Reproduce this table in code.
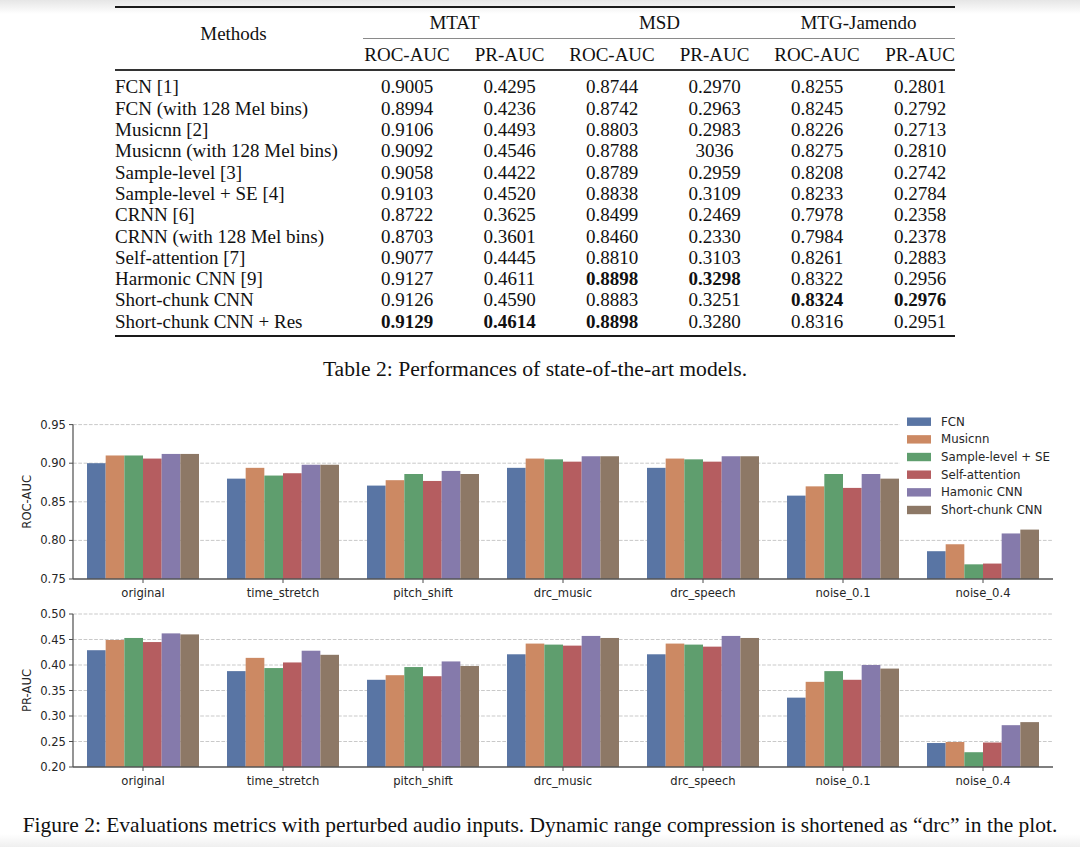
import React from "react";

const COLORS = ["#5975a4", "#cc8963", "#5f9e6e", "#b55d60", "#857aab", "#8d7866"];
const MODELS = ["FCN", "Musicnn", "Sample-level + SE", "Self-attention", "Hamonic CNN", "Short-chunk CNN"];
const GROUPS = ["original", "time_stretch", "pitch_shift", "drc_music", "drc_speech", "noise_0.1", "noise_0.4"];

const ROC = [
  [0.9, 0.91, 0.91, 0.906, 0.912, 0.912],
  [0.88, 0.894, 0.884, 0.887, 0.898, 0.898],
  [0.871, 0.878, 0.886, 0.877, 0.89, 0.886],
  [0.894, 0.906, 0.905, 0.902, 0.909, 0.909],
  [0.894, 0.906, 0.905, 0.902, 0.909, 0.909],
  [0.858, 0.87, 0.886, 0.868, 0.886, 0.88],
  [0.786, 0.795, 0.769, 0.77, 0.809, 0.814],
];

const PR = [
  [0.429, 0.449, 0.453, 0.445, 0.462, 0.46],
  [0.388, 0.414, 0.394, 0.405, 0.428, 0.42],
  [0.371, 0.38, 0.396, 0.378, 0.407, 0.398],
  [0.421, 0.442, 0.44, 0.438, 0.457, 0.453],
  [0.421, 0.442, 0.44, 0.436, 0.457, 0.453],
  [0.336, 0.367, 0.388, 0.371, 0.4, 0.393],
  [0.247, 0.249, 0.229, 0.248, 0.282, 0.288],
];

type Cell = { v: string; b?: boolean };

const ROWS: { name: string; cells: Cell[] }[] = [
  { name: "FCN [1]", cells: [{ v: "0.9005" }, { v: "0.4295" }, { v: "0.8744" }, { v: "0.2970" }, { v: "0.8255" }, { v: "0.2801" }] },
  { name: "FCN (with 128 Mel bins)", cells: [{ v: "0.8994" }, { v: "0.4236" }, { v: "0.8742" }, { v: "0.2963" }, { v: "0.8245" }, { v: "0.2792" }] },
  { name: "Musicnn [2]", cells: [{ v: "0.9106" }, { v: "0.4493" }, { v: "0.8803" }, { v: "0.2983" }, { v: "0.8226" }, { v: "0.2713" }] },
  { name: "Musicnn (with 128 Mel bins)", cells: [{ v: "0.9092" }, { v: "0.4546" }, { v: "0.8788" }, { v: "3036" }, { v: "0.8275" }, { v: "0.2810" }] },
  { name: "Sample-level [3]", cells: [{ v: "0.9058" }, { v: "0.4422" }, { v: "0.8789" }, { v: "0.2959" }, { v: "0.8208" }, { v: "0.2742" }] },
  { name: "Sample-level + SE [4]", cells: [{ v: "0.9103" }, { v: "0.4520" }, { v: "0.8838" }, { v: "0.3109" }, { v: "0.8233" }, { v: "0.2784" }] },
  { name: "CRNN [6]", cells: [{ v: "0.8722" }, { v: "0.3625" }, { v: "0.8499" }, { v: "0.2469" }, { v: "0.7978" }, { v: "0.2358" }] },
  { name: "CRNN (with 128 Mel bins)", cells: [{ v: "0.8703" }, { v: "0.3601" }, { v: "0.8460" }, { v: "0.2330" }, { v: "0.7984" }, { v: "0.2378" }] },
  { name: "Self-attention [7]", cells: [{ v: "0.9077" }, { v: "0.4445" }, { v: "0.8810" }, { v: "0.3103" }, { v: "0.8261" }, { v: "0.2883" }] },
  { name: "Harmonic CNN [9]", cells: [{ v: "0.9127" }, { v: "0.4611" }, { v: "0.8898", b: true }, { v: "0.3298", b: true }, { v: "0.8322" }, { v: "0.2956" }] },
  { name: "Short-chunk CNN", cells: [{ v: "0.9126" }, { v: "0.4590" }, { v: "0.8883" }, { v: "0.3251" }, { v: "0.8324", b: true }, { v: "0.2976", b: true }] },
  { name: "Short-chunk CNN + Res", cells: [{ v: "0.9129", b: true }, { v: "0.4614", b: true }, { v: "0.8898", b: true }, { v: "0.3280" }, { v: "0.8316" }, { v: "0.2951" }] },
];

const COLS = "grid grid-cols-[237px_110px_95px_110px_95px_110px_83px] whitespace-nowrap";

function ResultsTable() {
  return (
    <div className="ml-[115px] w-[840px] text-[19px] leading-[21.3px] text-[#111]">
      <div className="h-[2px] bg-[#1a1a1a]" />
      <div className={COLS}>
        <div className="row-span-3 pt-[14.6px] text-center">Methods</div>
        <div className="col-span-2 pt-[4px] pb-[5px] text-center">MTAT</div>
        <div className="col-span-2 pt-[4px] pb-[5px] text-center">MSD</div>
        <div className="col-span-2 pt-[4px] pb-[5px] text-center">MTG-Jamendo</div>
        <div className="col-span-6 ml-[11px] h-px bg-[#8a8a8a]" />
        <div className="pt-[4.4px] pb-[4.3px] text-center">ROC-AUC</div>
        <div className="pt-[4.4px] pb-[4.3px] text-center">PR-AUC</div>
        <div className="pt-[4.4px] pb-[4.3px] text-center">ROC-AUC</div>
        <div className="pt-[4.4px] pb-[4.3px] text-center">PR-AUC</div>
        <div className="pt-[4.4px] pb-[4.3px] text-center">ROC-AUC</div>
        <div className="pt-[4.4px] pb-[4.3px] pl-[13px] text-center">PR-AUC</div>
      </div>
      <div className="h-[1.5px] bg-[#333]" />
      <div className={`${COLS} pt-[5.7px] pb-[3.4px]`}>
        {ROWS.map((row) => (
          <React.Fragment key={row.name}>
            <div>{row.name}</div>
            {row.cells.map((c, i) => (
              <div key={i} className={`text-center ${i === 5 ? "pl-[13px]" : ""} ${c.b ? "font-bold" : ""}`}>
                {c.v}
              </div>
            ))}
          </React.Fragment>
        ))}
      </div>
      <div className="h-[2px] bg-[#1a1a1a]" />
      <p className="mt-[21.6px] whitespace-nowrap text-center text-[21.6px] leading-[21.3px]">
        Table 2: Performances of state-of-the-art models.
      </p>
    </div>
  );
}

const X0 = 73;
const X1 = 1053;
const GROUP_W = 140;
const BAR_W = 112 / 6;

function Subplot({
  data,
  ticks,
  min,
  base,
  scale,
  label,
}: {
  data: number[][];
  ticks: number[];
  min: number;
  base: number;
  scale: number;
  label: string;
}) {
  const y = (v: number) => base - (v - min) * scale;
  const top = y(ticks[ticks.length - 1]);
  return (
    <g>
      {ticks.slice(1).map((t) => (
        <line key={t} x1={X0} x2={X1} y1={y(t)} y2={y(t)} stroke="#c9c9c9" strokeWidth={1} strokeDasharray="3.7 1.6" />
      ))}
      {data.map((vals, g) =>
        vals.map((v, i) => {
          const x = X0 + GROUP_W * g + 14 + BAR_W * i;
          return <rect key={`${g}-${i}`} x={x} y={y(v)} width={BAR_W} height={base - y(v)} fill={COLORS[i]} />;
        })
      )}
      <line x1={X0} x2={X0} y1={top} y2={base} stroke="#4d4d4d" strokeWidth={1.2} />
      <line x1={X0} x2={X1} y1={base} y2={base} stroke="#555" strokeWidth={1.6} />
      {ticks.map((t) => (
        <g key={t}>
          <line x1={X0 - 4} x2={X0} y1={y(t)} y2={y(t)} stroke="#4d4d4d" strokeWidth={1} />
          <text x={X0 - 7} y={y(t)} textAnchor="end" dominantBaseline="central" fontSize={11.6} fill="#262626">
            {t.toFixed(2)}
          </text>
        </g>
      ))}
      {GROUPS.map((name, g) => {
        const cx = X0 + GROUP_W * g + 70;
        return (
          <g key={name}>
            <line x1={cx} x2={cx} y1={base} y2={base + 4} stroke="#4d4d4d" strokeWidth={1} />
            <text x={cx} y={base + 14} textAnchor="middle" dominantBaseline="central" fontSize={11.6} fill="#262626">
              {name}
            </text>
          </g>
        );
      })}
      <text
        x={27}
        y={(top + base) / 2}
        textAnchor="middle"
        dominantBaseline="central"
        fontSize={11.6}
        fill="#262626"
        transform={`rotate(-90 27 ${(top + base) / 2})`}
      >
        {label}
      </text>
    </g>
  );
}

function Legend() {
  return (
    <g>
      <rect x={900} y={410} width={158} height={110} fill="#fff" />
      {MODELS.map((m, i) => {
        const cy = 421.7 + i * 17.66;
        return (
          <g key={m}>
            <rect x={907} y={cy - 4.2} width={24} height={8.4} fill={COLORS[i]} />
            <text x={941} y={cy} dominantBaseline="central" fontSize={11.8} fill="#262626">
              {m}
            </text>
          </g>
        );
      })}
    </g>
  );
}

function PerturbationFigure() {
  return (
    <svg
      width={1080}
      height={400}
      viewBox="0 400 1080 400"
      className="mt-[19.4px] block font-['DejaVu_Sans',sans-serif]"
    >
      <Subplot data={ROC} ticks={[0.75, 0.8, 0.85, 0.9, 0.95]} min={0.75} base={579} scale={772} label="ROC-AUC" />
      <Legend />
      <Subplot data={PR} ticks={[0.2, 0.25, 0.3, 0.35, 0.4, 0.45, 0.5]} min={0.2} base={767} scale={510} label="PR-AUC" />
    </svg>
  );
}

export default function App() {
  return (
    <div className="h-[847px] w-[1080px] overflow-hidden bg-[linear-gradient(to_bottom,#e6e6e6_0px,#ffffff_14px,#ffffff_834px,#efefef_847px)] font-['Liberation_Serif','Times_New_Roman',serif] text-[#111]">
      <div className="h-[6px]" />
      <ResultsTable />
      <PerturbationFigure />
      <p className="mt-[15.3px] whitespace-nowrap text-center text-[21.5px] leading-[21.3px]">
        Figure 2: Evaluations metrics with perturbed audio inputs. Dynamic range compression is shortened as “drc” in the plot.
      </p>
    </div>
  );
}
